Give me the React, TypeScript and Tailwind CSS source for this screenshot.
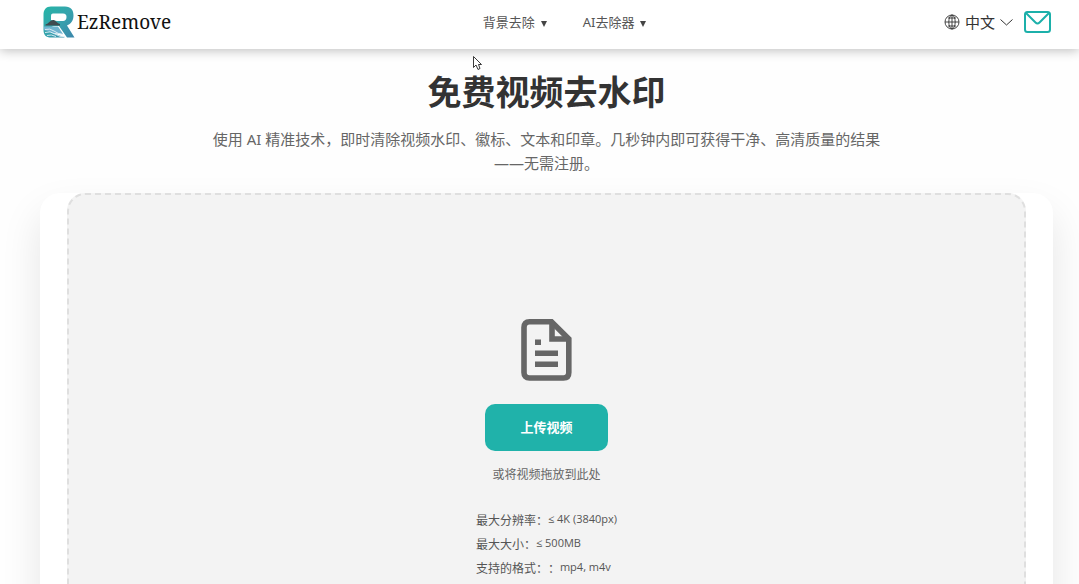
import React from "react";

const navItems = ["背景去除", "AI去除器"];

const limits = [
  { label: "最大分辨率：", value: "≤ 4K (3840px)" },
  { label: "最大大小：", value: "≤ 500MB" },
  { label: "支持的格式：：", value: "mp4, m4v" },
];

function Logo() {
  return (
    <svg viewBox="0 0 32 32" className="h-8 w-8" aria-hidden="true">
      <defs>
        <linearGradient id="mark" x1="0" y1="0" x2="1" y2="1">
          <stop offset="0" stopColor="#25b5a6" />
          <stop offset="0.5" stopColor="#36a3ad" />
          <stop offset="1" stopColor="#3c86ab" />
        </linearGradient>
      </defs>
      <path
        d="M8 0.5H22C28 0.5 30.5 4 30.5 9.500C30.500 14.500 28 18 24 19.500L31.500 31.500H24L16 20H12C9 20 7.500 21.500 7.500 24C7.500 26 8.500 27 11 27.500L22 31.500H8C3 31.500 0.500 29 0.500 24V9C0.500 3.500 3 0.500 8 0.500Z"
        fill="url(#mark)"
      />
      <path d="M10 7.500H20C22.500 7.500 23.500 9 23.500 11C23.500 13.500 22 15 20 15H14L8 14V10C8 8.500 8.500 7.500 10 7.500Z" fill="#fff" />
      <path d="M2.500 18.500C5 18 7 14.500 10 14C12.500 14 13 16.500 17 18V19.500H2.500Z" fill="#404a50" />
      <path d="M1 20.500H15L20 28L10 27L1 24Z" fill="#6fb3cf" />
      <path d="M2 23.500Q7 22 11 25T20 28.500M2 26.500Q7 24.500 12 28T22 30.500M4 29.500Q8 28 13 30.500" fill="none" stroke="#e4f1f7" strokeWidth="0.900" />
    </svg>
  );
}

function Globe() {
  return (
    <svg viewBox="0 0 16 16" className="h-4 w-4" fill="none" stroke="#333" strokeWidth="0.900" aria-hidden="true">
      <circle cx="8" cy="8" r="7" />
      <ellipse cx="8" cy="8" rx="3.200" ry="7" />
      <path d="M8 1V15M1 8H15M4 4H12M4 12H12" />
    </svg>
  );
}

function FileIcon() {
  return (
    <svg viewBox="0 0 52 62" className="h-[62px] w-[52px]" aria-hidden="true">
      <path
        d="M8.500 2.800H30.500L47.800 20V53.500Q47.800 59 42.500 59H8.500Q3 59 3 53.500V8.500Q3 2.800 8.500 2.800Z"
        fill="none"
        stroke="#666"
        strokeWidth="5.600"
      />
      <path d="M31 3V20H48" fill="none" stroke="#666" strokeWidth="5.600" />
      <path d="M14 20.500H20V26H14ZM14 31.500H37V37H14ZM14 42.500H37V48H14Z" fill="#666" />
    </svg>
  );
}

export default function App() {
  return (
    <div className="relative h-screen overflow-hidden bg-[#fefefe] font-['Noto_Sans','Noto_Sans_CJK_SC',sans-serif] text-[#666]">
      <header className="flex h-[49px] items-center justify-between bg-white pr-[28px] pb-[5px] pl-[43px] shadow-[0_2px_10px_rgba(0,0,0,0.24)]">
        <a href="#home" className="flex items-center gap-[2px]">
          <Logo />
          <span className="font-['Noto_Serif','Liberation_Serif',serif] text-[19px] leading-6 text-[#111]">EzRemove</span>
        </a>
        <nav className="flex gap-9 pl-[14px]">
          {navItems.map((item) => (
            <button key={item} type="button" className="flex items-center gap-[6px] text-[13px] leading-5 text-[#555]">
              {item}
              <svg viewBox="0 0 6 6" className="mt-[3px] h-[6px] w-[6px]" aria-hidden="true">
                <path d="M0 0H6L3 6Z" fill="#444" />
              </svg>
            </button>
          ))}
        </nav>
        <div className="flex items-center gap-[11px]">
          <button type="button" aria-label="语言：中文" className="flex items-center gap-[5px] text-[15px] leading-5 text-[#333]">
            <Globe />
            中文
            <svg viewBox="0 0 13 7" className="h-[7px] w-[13px]" fill="none" stroke="#333" aria-hidden="true">
              <path d="M0.500 0.500L6.500 6L12.500 0.500" />
            </svg>
          </button>
          <a href="#mail" aria-label="邮箱">
            <svg viewBox="0 0 27 22" className="h-[22px] w-[27px]" fill="none" stroke="#1cb0aa" strokeWidth="2" aria-hidden="true">
              <rect x="1" y="1" width="25" height="20" rx="2.500" />
              <path d="M2 2L11.500 11.500Q13.500 13.500 15.500 11.500L25 2" />
            </svg>
          </a>
        </div>
      </header>

      <main className="pr-[26px] pl-[40px]">
        <h1 className="pt-[19px] text-center text-[34px] leading-[48px] font-bold text-[#333]">免费视频去水印</h1>
        <p className="mx-auto mt-[11px] mb-[18px] max-w-[680px] text-center text-[15px] leading-6">
          使用 AI 精准技术，即时清除视频水印、徽标、文本和印章。几秒钟内即可获得干净、高清质量的结果——无需注册。
        </p>
        <section className="rounded-[20px] bg-white px-[27px] pb-7 shadow-[0_20px_40px_rgba(0,0,0,0.1)]">
          <div className="flex min-h-[480px] flex-col items-center rounded-[18px] border-2 border-dashed border-[#dfdfdf] bg-[#f3f3f3] pt-[124px]">
            <FileIcon />
            <button type="button" className="mt-[23px] h-[47px] rounded-[10px] bg-[#20b2aa] px-[35px] text-[13px] font-bold text-white">
              上传视频
            </button>
            <p className="mt-[14px] text-[12px] leading-5">或将视频拖放到此处</p>
            <dl className="mt-6 [text-spacing-trim:space-all]">
              {limits.map(({ label, value }) => (
                <div key={label} className="flex h-6 items-start text-[#555]">
                  <dt className="pt-[2px] text-[12px] leading-5">{label}</dt>
                  <dd className="font-['Open_Sans','Noto_Sans',sans-serif] text-[11px] leading-5">{value}</dd>
                </div>
              ))}
            </dl>
          </div>
        </section>
      </main>

      <svg viewBox="0 0 10 15" className="absolute top-[56px] left-[473px] h-[15px] w-[10px]" aria-hidden="true">
        <path d="M0.500 0.500V11.500L3 9L5 13.500L7 12.500L5.500 8.500H8.500Z" fill="#fff" stroke="#222" strokeWidth="0.900" />
      </svg>
    </div>
  );
}
